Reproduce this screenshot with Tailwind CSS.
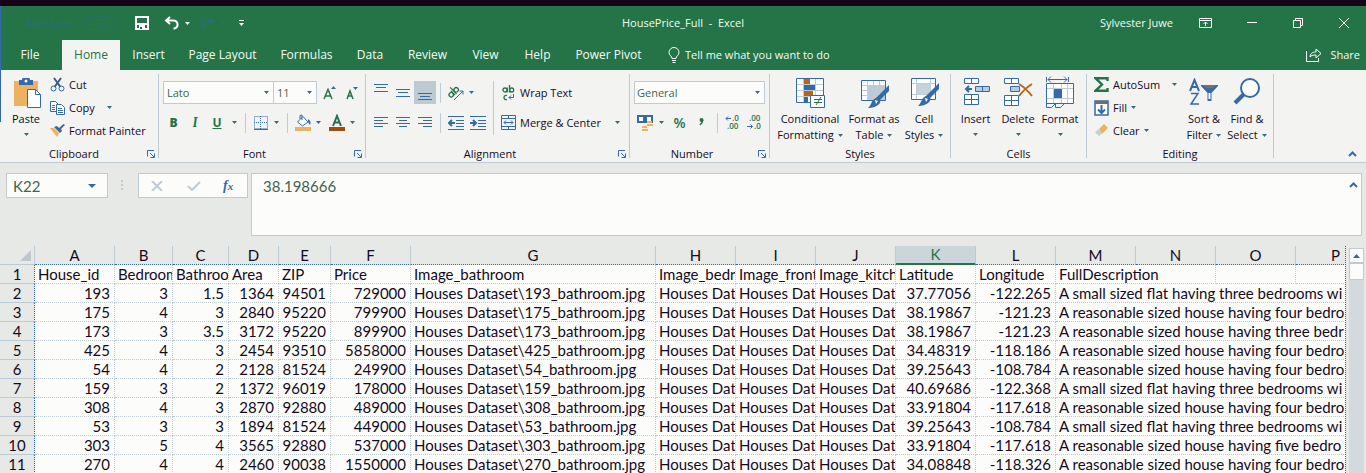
<!DOCTYPE html>
<html lang="en">
<head>
<meta charset="utf-8">
<title>HousePrice_Full - Excel</title>
<script src="https://cdn.jsdelivr.net/npm/@tailwindcss/browser@4"></script>
</head>
<body class="flex h-screen flex-col overflow-hidden bg-[#e7e9e7] font-['Open_Sans',sans-serif] text-[11px] leading-4 text-[#150a1c]">
<svg class="hidden">
  <symbol id="caret" viewBox="0 0 5 3"><path d="M0 0h5L2.500 3z" fill="currentColor"/></symbol>
  <symbol id="launch" viewBox="0 0 8 8"><path d="M.5 6.500v-6H7M3 3l4 4M7.500 3.500v4h-4" fill="none" stroke="#356aa8"/></symbol>
</svg>

<header class="shrink-0 border-t-[6px] border-[#150318] bg-[#247447] text-[12px] text-[#f4faf5]">
  <div class="flex h-[34px] items-center border-l border-[#356aa8]">
    <div class="flex flex-1 items-center">
      <span class="ml-6 text-[11px] text-[#2f6a8c] opacity-80">AutoSave</span>
      <svg class="ml-2 opacity-80" width="34" height="14" viewBox="0 0 34 14" fill="none" stroke="#356aa8" stroke-dasharray="1 2"><rect x=".5" y=".5" width="33" height="13" rx="6"/><circle cx="7" cy="7" r="3"/><path d="M19 4h8v6h-8z"/></svg>
      <button aria-label="Save" class="ml-5"><svg width="14" height="14" viewBox="0 0 14 14" shape-rendering="crispEdges"><path d="M1 1h12v12H1zM1 7.500h12" fill="none" stroke="#fff" stroke-width="2"/><path d="M4 9h6v4H4z" fill="#fff"/><path d="M5 11h2v2H5z" fill="#247447"/></svg></button>
      <button aria-label="Undo" class="ml-[15px] flex items-center gap-[6px]"><svg width="15" height="14" viewBox="0 0 15 14" fill="none" stroke="#fff" stroke-width="2"><path d="M6 1L2 4.500 6 8M2 4.500h7c6 0 6 8 .5 8"/></svg><svg width="5" height="3"><use href="#caret"/></svg></button>
      <svg class="ml-[11px]" width="24" height="12" viewBox="0 0 24 12" fill="none" stroke="#356aa8" stroke-dasharray="1 1"><path d="M12 4H5c-5 0-5 7 0 7M9 1l4 3-4 3M23 4l-3 2 3 2"/></svg>
      <button aria-label="Customize Quick Access Toolbar" class="ml-[14px]"><svg width="5" height="6" viewBox="0 0 5 6"><path d="M0 0h5v1H0zM0 3h5L2.500 6z" fill="#fff"/></svg></button>
    </div>
    <h1 class="shrink-0 whitespace-pre pl-4 text-[11px]">HousePrice_Full  -  Excel</h1>
    <div class="flex flex-1 items-center justify-end pr-[17px]">
      <span class="mr-[26px] text-[11px]">Sylvester Juwe</span>
      <button aria-label="Ribbon Display Options" class="mr-[35px]"><svg width="13" height="10" viewBox="0 0 13 10" fill="none" stroke="#fff"><path d="M.5.5h12v9H.5zM.5 2.500h12M6.500 8V4M4.500 6l2-2 2 2"/></svg></button>
      <button aria-label="Minimize" class="mr-9"><svg width="10" height="10"><path d="M0 4.500h10" stroke="#fff"/></svg></button>
      <button aria-label="Restore" class="mr-9"><svg width="10" height="10" viewBox="0 0 10 10" fill="none" stroke="#fff"><path d="M.5 2.500h7v7h-7zM2.500 2.500v-2h7v7h-2"/></svg></button>
      <button aria-label="Close"><svg width="10" height="10" viewBox="0 0 10 10" stroke="#fff"><path d="M0 0l10 10M10 0L0 10"/></svg></button>
    </div>
  </div>
  <nav class="flex h-[30px] items-stretch border-l border-[#356aa8]">
    <button class="ml-px w-[60px] pr-1">File</button>
    <button class="w-[58px] bg-[#f3f4f2] text-[#247447]">Home</button>
    <button class="w-[57px]">Insert</button>
    <button class="w-[91px]">Page Layout</button>
    <button class="w-[77px]">Formulas</button>
    <button class="w-[50px]">Data</button>
    <button class="w-[65px]">Review</button>
    <button class="w-[51px]">View</button>
    <button class="w-[53px]">Help</button>
    <button class="w-[89px]">Power Pivot</button>
    <button class="ml-[15px] flex items-center gap-[5px] text-[11px]"><svg width="12" height="17" viewBox="0 0 12 17" fill="none" stroke="#fff"><path d="M4 11.500c0-2.500-3-3-3-6a5 5 0 0 1 10 0c0 3-3 3.500-3 6zM4 13.500h4M4.500 15.500h3"/></svg>Tell me what you want to do</button>
    <button class="ml-auto mr-[6px] flex items-center gap-2 text-[11px]"><svg width="16" height="14" viewBox="0 0 16 14" fill="none" stroke="#fff"><path d="M.5 3v10.500h12V10M4 9c0-3 2-5 6-5V1l5 4.500L10 10V7C7 7 5 7.500 4 9z"/></svg>Share</button>
  </nav>
</header>

<section aria-label="Ribbon" class="flex h-[93px] shrink-0 border-b border-[#bdcbd6] bg-[#f3f4f2] [&_button]:shrink-0">
  <div class="mb-10 w-px shrink-0 bg-[#356aa8]"></div>
  <!-- Clipboard -->
  <div class="flex w-[157px] flex-col">
    <div class="flex h-[76px] pl-[9px]">
      <button class="flex w-8 flex-col items-center pt-2">
        <svg width="30" height="30" viewBox="0 0 30 30"><path d="M3 3h24v25H3z" fill="#ecb261"/><path d="M8 2h3a4 3 0 0 1 8 0h3v5H8z" fill="#356aa8"/><circle cx="15" cy="3" r="1.500" fill="#f3f4f2"/><path d="M16.500 11.500h8l5 5v13h-13z" fill="#fff" stroke="#356aa8"/><path d="M24.500 11.500v5h5" fill="none" stroke="#356aa8"/></svg>
        <span class="mt-[3px]">Paste</span><svg class="mt-[6px] text-[#356a85]" width="5" height="3"><use href="#caret"/></svg>
      </button>
      <div class="flex flex-col pl-2 pt-[3px]">
        <button class="flex h-[23px] items-center gap-1"><svg width="15" height="15" viewBox="0 0 15 15" fill="none"><path d="M4 1l6.500 9M11 1L4.500 10" stroke="#3c5c78" stroke-width="2"/><circle cx="3.500" cy="11.500" r="2.500" stroke="#356aa8"/><circle cx="11.500" cy="11.500" r="2.500" stroke="#356aa8"/></svg>Cut</button>
        <button class="flex h-[23px] items-center gap-1"><svg width="15" height="14" viewBox="0 0 15 14" fill="#fff" stroke="#356aa8"><path d="M.5.500h5l3 3v7h-8z"/><path d="M2 4.500h3M2 6.500h3M2 8.500h3"/><path d="M6.500 3.500h5l3 3v7h-8z"/><path d="M8 7.500h4M8 9.500h5M8 11.500h5"/></svg>Copy<svg class="ml-2 text-[#356a85]" width="5" height="3"><use href="#caret"/></svg></button>
        <button class="flex h-[23px] items-center gap-1 whitespace-nowrap"><svg width="15" height="13" viewBox="0 0 15 13"><path d="M0 4l4 0 5 5-2 4z" fill="#ecb261"/><path d="M4 3l6 6 2-2-1-2 4-4-1.500-1L9 4 7 2z" fill="#3f6690"/></svg>Format Painter</button>
      </div>
    </div>
    <div class="flex h-4 items-center pr-[3px]"><span class="flex-1 text-center">Clipboard</span><button aria-label="Clipboard settings"><svg width="8" height="8"><use href="#launch"/></svg></button></div>
  </div>
  <div class="my-1 w-px bg-[#bdcbd6]"></div>
  <!-- Font -->
  <div class="flex w-[206px] flex-col text-[#247447]">
    <div class="flex h-[76px] flex-col gap-[7px] pl-1 pt-[11px]">
      <div class="flex h-[23px] items-center">
        <div class="flex h-[23px] w-[111px] items-center border border-[#bdcbd6] bg-[#fcfdfb] pr-1"><input aria-label="Font" value="Lato" class="w-0 flex-1 pl-[3px] text-[#3f6350] outline-none"><svg class="text-[#356a85]" width="5" height="3"><use href="#caret"/></svg></div>
        <div class="-ml-px flex h-[23px] w-[44px] items-center border border-[#bdcbd6] bg-[#fcfdfb] pr-1"><input aria-label="Font size" value="11" class="w-0 flex-1 pl-[3px] text-[#3f6350] outline-none"><svg class="text-[#356a85]" width="5" height="3"><use href="#caret"/></svg></div>
        <button aria-label="Increase font size" class="ml-[6px]"><svg width="14" height="14" viewBox="0 0 14 14"><path d="M1 13L5 3.500 9 13M2.500 10h5" fill="none" stroke="#247447" stroke-width="1.500"/><path d="M8 3l2.500-3L13 3z" fill="#356aa8"/></svg></button>
        <button aria-label="Decrease font size" class="ml-[9px]"><svg width="13" height="14" viewBox="0 0 13 14"><path d="M1 13l3-8 3 8M2 10h4" fill="none" stroke="#247447" stroke-width="1.500"/><path d="M7 1l2.500 3L12 1z" fill="#356aa8"/></svg></button>
      </div>
      <div class="flex h-[23px] items-center">
        <button class="w-[21px] text-[12px] font-extrabold">B</button><button class="w-[22px] font-serif text-[13px] font-bold italic">I</button><button class="w-[22px] text-[12px] font-bold underline">U</button>
        <svg class="ml-1 text-[#356a85]" width="5" height="3"><use href="#caret"/></svg>
        <div class="ml-2 h-5 w-px bg-[#bdcbd6]"></div>
        <button aria-label="Borders" class="flex items-center gap-[6px] pl-2 text-[#356a85]"><svg width="14" height="14" viewBox="0 0 14 14" fill="none" stroke="#356aa8"><path d="M.5.500h13v12H.5zM6.500 0v13M0 6.500h14" stroke-dasharray="1 1"/><path d="M0 13.500h14"/></svg><svg width="5" height="3"><use href="#caret"/></svg></button>
        <div class="ml-2 h-5 w-px bg-[#bdcbd6]"></div>
        <button aria-label="Fill color" class="flex items-center gap-[5px] pl-[7px] text-[#356a85]"><svg width="16" height="17" viewBox="0 0 16 17"><path d="M2.500 8L8 2.500l5 5.500-5.500 4z" fill="#fff" stroke="#356aa8"/><path d="M5 5V1.500L7 1v5" fill="none" stroke="#356aa8"/><path d="M13 5c3 2 3 4 2 6l-2-3z" fill="#356aa8"/><path d="M0 13h16v4H0z" fill="#ecb261"/></svg><svg width="5" height="3"><use href="#caret"/></svg></button>
        <button aria-label="Font color" class="ml-2 flex items-center gap-[5px] text-[#356a85]"><svg width="16" height="17" viewBox="0 0 16 17"><path d="M4 12L8 2l4 10M5.500 8.500h5" fill="none" stroke="#2d6a58" stroke-width="2"/><path d="M0 13h16v4H0z" fill="#a04d0c"/></svg><svg width="5" height="3"><use href="#caret"/></svg></button>
      </div>
    </div>
    <div class="flex h-4 items-center pr-[3px] text-[#150a1c]"><span class="flex-1 pr-1 text-center">Font</span><button aria-label="Font settings"><svg width="8" height="8"><use href="#launch"/></svg></button></div>
  </div>
  <div class="my-1 w-px bg-[#bdcbd6]"></div>
  <!-- Alignment -->
  <div class="flex w-[263px] flex-col">
    <div class="flex h-[76px] pl-1 pt-[11px]">
      <div class="flex w-[123px] flex-col gap-[7px]">
        <div class="flex h-[23px] items-center">
          <button aria-label="Top align" class="flex w-[22px] justify-center"><svg width="14" height="17"><path d="M0 .5h14M2 3.500h10M0 7.500h14" stroke="#356aa8"/></svg></button>
          <button aria-label="Middle align" class="flex w-[22px] justify-center"><svg width="14" height="17"><path d="M0 5.500h14M2 8.500h10M0 12.500h14" stroke="#356aa8"/></svg></button>
          <button aria-label="Bottom align" class="flex h-[23px] w-[22px] items-end justify-center bg-[#bdcad3] pb-1"><svg width="14" height="7"><path d="M0 .5h14M2 3.500h10M0 6.500h14" stroke="#356aa8"/></svg></button>
          <div class="ml-1 h-5 w-px bg-[#bdcbd6]"></div>
          <button aria-label="Orientation" class="ml-[7px] flex items-center gap-1 text-[#356a85]"><svg class="overflow-visible" width="17" height="16" viewBox="0 0 17 16"><g fill="none" stroke="#247447" stroke-width="1.300" transform="rotate(-45 5 8)"><circle cx="2.500" cy="8" r="2.200"/><path d="M5 5v6M7 2v9"/><circle cx="9.500" cy="8" r="2.200"/></g><path d="M6 15L15 6M11.500 6H15v3.500" fill="none" stroke="#356aa8"/></svg><svg width="5" height="3"><use href="#caret"/></svg></button>
        </div>
        <div class="flex h-[23px] items-center">
          <button aria-label="Align left" class="flex w-[22px] justify-center"><svg width="14" height="11"><path d="M0 .5h14M0 3.500h9M0 6.500h14M0 9.500h9" stroke="#356a9a"/></svg></button>
          <button aria-label="Center" class="flex w-[22px] justify-center"><svg width="14" height="11"><path d="M0 .5h14M3 3.500h8M0 6.500h14M3 9.500h8" stroke="#356a9a"/></svg></button>
          <button aria-label="Align right" class="flex w-[22px] justify-center"><svg width="14" height="11"><path d="M0 .5h14M5 3.500h9M0 6.500h14M5 9.500h9" stroke="#356a9a"/></svg></button>
          <div class="ml-1 h-5 w-px bg-[#bdcbd6]"></div>
          <button aria-label="Decrease indent" class="ml-[7px]"><svg width="16" height="14" viewBox="0 0 16 14" fill="none" stroke="#356aa8"><path d="M0 .5h16M8 4.500h8M8 7.500h8M8 10.500h8M0 13.500h16"/><path d="M1 7h6M4 4L1 7l3 3" stroke-width="2"/></svg></button>
          <button aria-label="Increase indent" class="ml-[6px]"><svg width="16" height="14" viewBox="0 0 16 14" fill="none" stroke="#356aa8"><path d="M0 .5h16M8 4.500h8M8 7.500h8M8 10.500h8M0 13.500h16"/><path d="M0 7h6M3 4l3 3-3 3" stroke-width="2"/></svg></button>
        </div>
      </div>
      <div class="h-[54px] w-px bg-[#bdcbd6]"></div>
      <div class="flex flex-1 flex-col gap-[7px] pl-[7px]">
        <button class="flex h-[23px] items-center gap-1"><svg width="15" height="16" viewBox="0 0 15 16"><g fill="none" stroke="#247447" stroke-width="1.300"><circle cx="4" cy="5" r="2"/><path d="M6.200 2.500v5M8.500 0v7.500"/><circle cx="10.700" cy="5" r="2"/><path d="M6 10.500c-4-1.500-4 5.500 0 4"/></g><path d="M12.500 9v3.500H8M10 10.500l-2 2 2 2" fill="none" stroke="#356aa8"/></svg>Wrap Text</button>
        <button class="flex h-[23px] items-center gap-1 pr-[9px]"><svg width="15" height="15" viewBox="0 0 15 15" fill="none" stroke="#356aa8"><path d="M.5.500h14v14H.5zM.5 3.500h14M.5 11.500h14M7.500 0v3M7.500 12v3M3 7.500h9M5 5.500l-2 2 2 2M10 5.500l2 2-2 2"/></svg>Merge &amp; Center<svg class="ml-auto text-[#356a85]" width="5" height="3"><use href="#caret"/></svg></button>
      </div>
    </div>
    <div class="flex h-4 items-center pr-[3px]"><span class="flex-1 pr-1 text-center">Alignment</span><button aria-label="Alignment settings"><svg width="8" height="8"><use href="#launch"/></svg></button></div>
  </div>
  <div class="my-1 w-px bg-[#bdcbd6]"></div>
  <!-- Number -->
  <div class="flex w-[139px] flex-col">
    <div class="flex h-[76px] flex-col gap-[7px] pl-1 pt-[11px]">
      <div class="flex h-[23px] w-[131px] items-center border border-[#bdcbd6] bg-[#fcfdfb] pr-1"><input aria-label="Number format" value="General" class="w-0 flex-1 pl-[2px] text-[#3f6350] outline-none"><svg class="text-[#356a85]" width="5" height="3"><use href="#caret"/></svg></div>
      <div class="flex h-[23px] items-center text-[#247447]">
        <button aria-label="Accounting format" class="ml-[3px] flex items-center gap-[6px] text-[#356a85]"><svg width="16" height="16" viewBox="0 0 16 16"><path d="M1 1h14v6H1z" fill="#fff" stroke="#356aa8" stroke-width="2"/><path d="M6 2h4v4H6z" fill="#356aa8"/><path d="M10 6h5v2h-5zM10 9h6v2h-6zM5 11h5v2H5zM5 14h6v2H5z" fill="#ecb261"/></svg><svg width="5" height="3"><use href="#caret"/></svg></button>
        <button class="ml-2 w-[15px] text-sm font-semibold">%</button>
        <button aria-label="Comma style" class="ml-2 flex w-[13px] justify-center pb-[2px]"><svg width="5" height="8" viewBox="0 0 5 8"><circle cx="2.500" cy="2" r="2" fill="#247447"/><path d="M3.800 2c0 2-1 3.500-3 5" fill="none" stroke="#247447" stroke-width="1.500"/></svg></button>
        <div class="ml-[9px] h-5 w-px bg-[#bdcbd6]"></div>
        <button aria-label="Increase decimal" class="ml-[7px]"><svg width="15" height="15" viewBox="0 0 15 15"><text x="7" y="6" font-size="8" fill="#247447" font-family="Open Sans" font-weight="600">.0</text><text x="2" y="14" font-size="8" fill="#247447" font-family="Open Sans" font-weight="600">.00</text><path d="M1 3.500h5M3 1.500l-2 2 2 2" fill="none" stroke="#356aa8"/></svg></button>
        <button aria-label="Decrease decimal" class="ml-[7px]"><svg width="15" height="15" viewBox="0 0 15 15"><text x="2" y="6" font-size="8" fill="#247447" font-family="Open Sans" font-weight="600">.00</text><text x="7" y="14" font-size="8" fill="#247447" font-family="Open Sans" font-weight="600">.0</text><path d="M0 11.500h5M3.500 9.500l2 2-2 2" fill="none" stroke="#356aa8"/></svg></button>
      </div>
    </div>
    <div class="flex h-4 items-center pr-[3px]"><span class="flex-1 pr-1 text-center">Number</span><button aria-label="Number settings"><svg width="8" height="8"><use href="#launch"/></svg></button></div>
  </div>
  <div class="my-1 w-px bg-[#bdcbd6]"></div>
  <!-- Styles -->
  <div class="flex w-[180px] flex-col">
    <div class="flex h-[76px] pl-1 pt-2">
      <button class="flex w-[72px] flex-col items-center"><svg width="30" height="30" viewBox="0 0 30 30"><path d="M1.500.500h27v24H1.500z" fill="#fff" stroke="#356aa8"/><path d="M2 6.500h26M2 12.500h26M2 18.500h26M8.500 1v23M20.500 1v23" stroke="#bdcbd6"/><path d="M9 1h6v5H9zM9 13h9v5H9z" fill="#b8651c"/><path d="M9 7h11v5H9zM9 19h4v5H9z" fill="#356aa8"/><path d="M15.500 17.500h14v12h-14z" fill="#fff" stroke="#356aa8"/><path d="M19 21.500h8M19 24.500h8M26 19l-5 8" stroke="#247447"/></svg>
        <span class="mt-[3px]">Conditional</span><span class="flex items-center gap-1">Formatting<svg class="text-[#356a85]" width="5" height="3"><use href="#caret"/></svg></span></button>
      <button class="flex w-[56px] flex-col items-center whitespace-nowrap"><svg width="30" height="30" viewBox="0 0 30 30"><path d="M2.500 2.500h24v20h-24z" fill="#fff" stroke="#356aa8"/><path d="M8 8h18v14H8z" fill="#bdcbd6"/><path d="M3 7.500h23M3 12.500h5M3 17.500h5M8.500 3v19M14.500 3v5M20.500 3v5" stroke="#bdcbd6"/><path d="M30 7v6L19 24l-3-3z" fill="#356aa8"/><path d="M18 20c2 0 4 2 3 5-3 4-8 5-12 5 4-3 3-9 9-10z" fill="#356aa8"/><path d="M16 22l3 1-2 3z" fill="#fff"/></svg>
        <span class="mt-[3px]">Format as</span><span class="flex items-center gap-1">Table<svg class="text-[#356a85]" width="5" height="3"><use href="#caret"/></svg></span></button>
      <button class="flex w-[44px] flex-col items-center"><svg width="30" height="30" viewBox="0 0 30 30"><path d="M2.500.500h24v21h-24z" fill="#fff" stroke="#356aa8"/><path d="M8 6h13v10H8z" fill="#c7d3dc"/><path d="M3 5.500h23M3 16.500h23M7.500 1v20M21.500 1v20" stroke="#bdcbd6"/><path d="M30 5v6L19 22l-3-3z" fill="#356aa8"/><path d="M18 18c2 0 4 2 3 5-3 4-8 5-12 5 4-3 3-9 9-10z" fill="#356aa8"/><path d="M16 20l3 1-2 3z" fill="#fff"/></svg>
        <span class="mt-[3px]">Cell</span><span class="flex items-center gap-1">Styles<svg class="text-[#356a85]" width="5" height="3"><use href="#caret"/></svg></span></button>
    </div>
    <span class="text-center">Styles</span>
  </div>
  <div class="my-1 w-px bg-[#bdcbd6]"></div>
  <!-- Cells -->
  <div class="flex w-[135px] flex-col">
    <div class="flex h-[76px] pl-[3px] pt-2">
      <button class="flex w-[43px] flex-col items-center"><svg width="30" height="30" viewBox="0 0 30 30"><path d="M3.500.500h14v5h-14zM10.500.500v5M3.500 16.500h14v10h-14zM10.500 16v10M4 21.500h14" fill="#fff" stroke="#356aa8"/><path d="M14.500 8.500h14v5h-14zM21.500 8v6" fill="#bdcbd6" stroke="#356aa8"/><path d="M5 11h6M8 8l-3 3 3 3" fill="none" stroke="#356aa8" stroke-width="2"/></svg><span class="mt-[3px]">Insert</span><svg class="mt-[6px] text-[#356a85]" width="5" height="3"><use href="#caret"/></svg></button>
      <button class="flex w-[42px] flex-col items-center"><svg width="30" height="30" viewBox="0 0 30 30"><path d="M1.500.500h14v5h-14zM8.500.500v5M1.500 17.500h14v10h-14zM8.500 17v10M2 22.500h14" fill="#fff" stroke="#356aa8"/><path d="M7.500 8.500h9v5h-9z" fill="#bdcbd6" stroke="#356aa8"/><path d="M16 6c5 3 9 7 13 12M29 6c-5 3-9 7-13 12" fill="none" stroke="#b8651c" stroke-width="2"/></svg><span class="mt-[3px]">Delete</span><svg class="mt-[6px] text-[#356a85]" width="5" height="3"><use href="#caret"/></svg></button>
      <button class="flex w-[42px] flex-col items-center"><svg class="overflow-visible" width="30" height="30" viewBox="0 0 30 30"><path d="M1.500 5.500h27v20h-27z" fill="#fff" stroke="#356aa8"/><path d="M8.500 6v19M16.500 6v19M22.500 6v19M2 10.500h26M2 20.500h26" stroke="#bdcbd6"/><path d="M9 11h8v9H9z" fill="#356aa8"/><path d="M1.500-1v5M23.500-1v5M3 1.500h19M6-1.500l-3 3 3 3M19-1.500l3 3-3 3M1.500 25v4.500h5l4-4M10.500 25.500v4h5l4-4" fill="none" stroke="#356aa8"/></svg><span class="mt-[3px]">Format</span><svg class="mt-[6px] text-[#356a85]" width="5" height="3"><use href="#caret"/></svg></button>
    </div>
    <span class="text-center">Cells</span>
  </div>
  <div class="my-1 w-px bg-[#bdcbd6]"></div>
  <!-- Editing -->
  <div class="flex w-[186px] flex-col">
    <div class="flex h-[76px] pl-[7px]">
      <div class="flex w-[89px] flex-col pt-[3px]">
        <button class="flex h-[23px] items-center gap-1"><svg width="15" height="15" viewBox="0 0 15 15"><path d="M13.500 4V1.200H1.500L8 7.500l-6.500 6.300h12V11" fill="none" stroke="#247447" stroke-width="2.400"/></svg>AutoSum<svg class="ml-2 text-[#356a85]" width="5" height="3"><use href="#caret"/></svg></button>
        <button class="flex h-[23px] items-center gap-1"><svg width="15" height="16" viewBox="0 0 15 16"><path d="M1 1h13v14H1z" fill="#fff" stroke="#356aa8" stroke-width="1.500"/><path d="M1 1h13v3H1z" fill="#7d6c55"/><path d="M7.500 5v8M4 9.500L7.500 13 11 9.500" fill="none" stroke="#356aa8" stroke-width="2"/></svg>Fill<svg class="text-[#356a85]" width="5" height="3"><use href="#caret"/></svg></button>
        <button class="flex h-[23px] items-center gap-1"><svg width="15" height="13" viewBox="0 0 15 13"><path d="M5 5l5-5 4 4-6 6z" fill="#ecb261"/><path d="M1 8.500L4.500 5 8 9.500 5 12z" fill="#c3d0d8"/></svg>Clear<svg class="text-[#356a85]" width="5" height="3"><use href="#caret"/></svg></button>
      </div>
      <button class="flex w-[42px] flex-col items-center whitespace-nowrap pt-2"><svg width="30" height="30" viewBox="0 0 30 30"><path d="M1 13L5.500 2 10 13M2.500 9h6" fill="none" stroke="#356aa8" stroke-width="2"/><path d="M2 15.500h7L2 26h8" fill="none" stroke="#356aa8" stroke-width="1.500"/><path d="M12 7h17v1l-6.500 7v8h-4v-8L12 8z" fill="#356aa8"/><path d="M19.500 15h2v6h-2z" fill="#fff"/><path d="M14 7h13l-3 3h-7z" fill="#76706a"/></svg><span class="mt-[3px]">Sort &amp;</span><span class="flex items-center gap-1">Filter<svg class="text-[#356a85]" width="5" height="3"><use href="#caret"/></svg></span></button>
      <button class="flex w-[44px] flex-col items-center whitespace-nowrap pt-2"><svg width="30" height="30" viewBox="0 0 30 30"><path d="M12 16L3 25" stroke="#356aa8" stroke-width="4"/><circle cx="18" cy="10" r="9" fill="#fcfdfb" stroke="#356aa8" stroke-width="2"/></svg><span class="mt-[3px]">Find &amp;</span><span class="flex items-center gap-1">Select<svg class="text-[#356a85]" width="5" height="3"><use href="#caret"/></svg></span></button>
    </div>
    <span class="text-center">Editing</span>
  </div>
  <div class="my-1 w-px bg-[#bdcbd6]"></div>
  <button aria-label="Collapse the ribbon" class="mb-[5px] ml-auto mr-[9px] self-end"><svg width="9" height="6" viewBox="0 0 9 6"><path d="M1 5l3.500-3.500L8 5" fill="none" stroke="#356aa8" stroke-width="2"/></svg></button>
</section>

<section aria-label="Formula bar" class="flex shrink-0 items-start pb-[10px] pl-[6px] pr-1 pt-[10px] font-[Lato,sans-serif] text-[15px] text-[#3f6350]">
  <div class="flex h-[25px] w-[102px] items-center border border-[#bdcbd6] bg-[#fcfdfb] pr-[11px]"><input aria-label="Name box" value="K22" class="w-0 flex-1 pl-[6px] outline-none"><svg class="text-[#356aa8]" width="8" height="4" viewBox="0 0 8 4"><path d="M0 0h8L4 4z" fill="currentColor"/></svg></div>
  <svg class="ml-[13px] mt-[7px]" width="3" height="11" fill="#bdcbd6"><path d="M0 0h2v2H0zM0 4h2v2H0zM0 8h2v2H0z"/></svg>
  <div class="ml-[14px] flex h-[25px] w-[110px] items-center border border-[#bdcbd6] bg-[#fcfdfb] pl-3">
    <button aria-label="Cancel"><svg width="12" height="10" viewBox="0 0 12 10"><path d="M1 0l10 10M11 0L1 10" stroke="#bdcbd6" stroke-width="2"/></svg></button>
    <button aria-label="Enter" class="ml-6"><svg width="14" height="10" viewBox="0 0 14 10"><path d="M1 5l4 4 8-8" fill="none" stroke="#bdcbd6" stroke-width="2"/></svg></button>
    <button class="ml-[22px] font-['Liberation_Serif',serif] text-sm font-bold italic leading-4 text-[#356aa8]">f<span class="text-[11px]">x</span></button>
  </div>
  <div class="ml-[3px] flex h-[63px] flex-1 items-start border border-[#bdcbd6] bg-[#fcfdfb] pr-[3px]">
    <textarea aria-label="Formula" class="h-[61px] flex-1 resize-none overflow-hidden pl-[11px] pt-[2px] leading-5 outline-none">38.198666</textarea>
    <button aria-label="Collapse formula bar" class="mt-2"><svg class="block" width="9" height="6" viewBox="0 0 9 6"><path d="M1 5l3.500-3.500L8 5" fill="none" stroke="#356aa8" stroke-width="2"/></svg></button>
  </div>
</section>

<main class="flex min-h-0 flex-1">
  <div class="min-w-0 flex-1 overflow-hidden border-r border-dotted border-[#356aa8]">
    <table class="w-[1376px] table-fixed border-separate border-spacing-0 font-[Lato,sans-serif] text-[15px] leading-[18px]">
      <colgroup><col class="w-[35px]"><col class="w-20"><col class="w-[58px]"><col class="w-14"><col class="w-[50px]"><col class="w-[52px]"><col class="w-20"><col class="w-[245px]"><col span="9" class="w-20"></colgroup>
      <thead id="head"></thead>
      <tbody id="body"></tbody>
    </table>
  </div>
  <div class="ml-[3px] mr-[2px] mt-[2px] flex w-[15px] flex-col bg-[#d2dade]">
    <button aria-label="Scroll up" class="flex h-[15px] items-center justify-center border border-[#bdcbd6] bg-[#fcfdfb]"><svg width="7" height="4"><path d="M0 4l3.500-4L7 4z" fill="#3f6690"/></svg></button>
    <div class="h-[17px] border border-[#bdcbd6] bg-[#fcfdfb]"></div>
  </div>
</main>

<script>
const rows = [
  [193,3,1.5,1364,94501,729000,'37.77056','-122.265','A small sized flat having three bedrooms wi'],
  [175,4,3,2840,95220,799900,'38.19867','-121.23','A reasonable sized house having four bedro'],
  [173,3,3.5,3172,95220,899900,'38.19867','-121.23','A reasonable sized house having three bedr'],
  [425,4,3,2454,93510,5858000,'34.48319','-118.186','A reasonable sized house having four bedro'],
  [54,4,2,2128,81524,249900,'39.25643','-108.784','A reasonable sized house having four bedro'],
  [159,3,2,1372,96019,178000,'40.69686','-122.368','A small sized flat having three bedrooms wi'],
  [308,4,3,2870,92880,489000,'33.91804','-117.618','A reasonable sized house having four bedro'],
  [53,3,3,1894,81524,449000,'39.25643','-108.784','A small sized flat having three bedrooms wi'],
  [303,5,4,3565,92880,537000,'33.91804','-117.618','A reasonable sized house having five bedro'],
  [270,4,4,2460,90038,1550000,'34.08848','-118.326','A reasonable sized house having four bedro']
];
const edge = 'overflow-hidden whitespace-nowrap border-b border-r border-dotted border-[#bdcbd6] bg-[#fcfdfb] p-0 ';
const text = v => `<td class="${edge}pl-[3px] text-left">${v}</td>`;
const num = v => `<td class="${edge}pr-1 text-right">${v}</td>`;
const rowHead = n => `<th class="border-b border-r border-b-[#bdcbd6] border-r-[#356aa8] [border-right-style:dotted] p-0 text-center font-normal">${n}</th>`;
document.getElementById('head').innerHTML = '<tr><th class="border-b border-r border-[#bdcbd6] p-0"><svg class="ml-auto mr-[3px] block" width="11" height="11"><path d="M11 0v11H0z" fill="#bdc7cd"/></svg></th>' +
  [...'ABCDEFGHIJKLMNOP'].map(c => c === 'K'
    ? `<th class="border-b-2 border-r border-b-[#247447] border-r-[#bdcbd6] bg-[#cbd5da] p-0 font-normal leading-[17px] text-[#247447]">${c}</th>`
    : `<th class="border-b border-r border-b-[#356aa8] border-r-[#bdcbd6] [border-bottom-style:dotted] p-0 font-normal">${c}</th>`).join('') + '</tr>';
const titles = ['House_id','Bedrooms','Bathrooms','Area','ZIP','Price','Image_bathroom','Image_bedroom','Image_frontal','Image_kitchen','Latitude','Longitude'];
document.getElementById('body').innerHTML =
  `<tr>${rowHead(1)}${titles.map(text).join('')}<td colspan="2" class="${edge}pl-[3px]">FullDescription</td>${text('')}${text('')}</tr>` +
  rows.map((r, i) => `<tr>${rowHead(i + 2)}${r.slice(0, 6).map(num).join('')}${text('Houses Dataset\\' + r[0] + '_bathroom.jpg')}${text('Houses Dataset').repeat(3)}${num(r[6])}${num(r[7])}<td colspan="4" class="${edge}pl-[3px]">${r[8]}</td></tr>`).join('');
</script>
</body>
</html>
